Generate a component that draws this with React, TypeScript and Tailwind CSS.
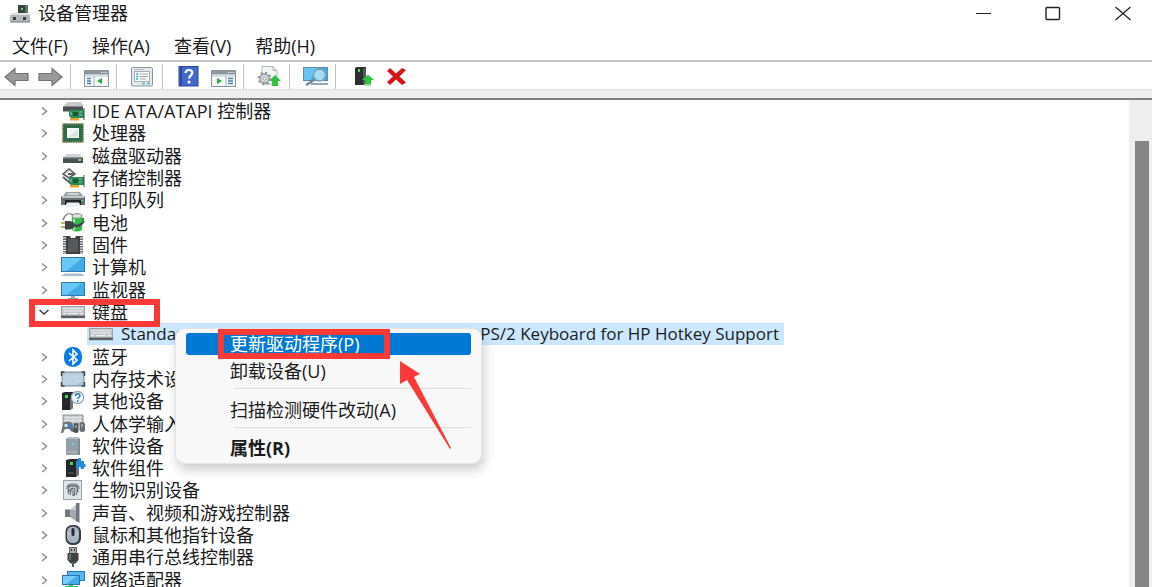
import React from 'react';

type IconName =
  | 'ide' | 'cpu' | 'disk' | 'storage' | 'printer' | 'battery' | 'firmware' | 'computer'
  | 'monitor' | 'keyboard' | 'bluetooth' | 'memory' | 'other' | 'hid' | 'softdev'
  | 'softcomp' | 'biometric' | 'sound' | 'mouse' | 'usb' | 'network';

const keyRows = (
  <g>
    <rect x="0" y="4" width="24" height="12" fill="#9da1a6" />
    <rect x="1" y="5" width="22" height="8" fill="#c3c7cb" />
    <path d="M2 6.5h20M3 9h18" stroke="#eceef0" strokeWidth="1.6" strokeDasharray="1.6 .7" />
    <path d="M2 11.6h3M7 11.6h10M19 11.6h3" stroke="#eceef0" strokeWidth="1.4" />
    <path d="M0 15h24" stroke="#5c6166" strokeWidth="2.4" />
  </g>
);

const chipCard = (
  <g>
    <path d="M8 9h15v8H10l-2-2z" fill="#2d8a54" />
    <path d="M9 17h9v2.5H9z" fill="#e6a52c" />
    <path d="M12 11h5v4h-5z" fill="#165a37" />
    <path d="M18 11h3M18 14h3M10 11v3" stroke="#7ed39f" />
    <path d="M23 7v12" stroke="#3c5145" />
  </g>
);

const tower = (
  <g>
    <path d="M5 2l4-1h8v16l-2 2H5z" fill="#25282a" />
    <path d="M15 3l3-2v16l-3 2z" fill="#6b7073" />
    <rect x="9" y="4" width="3" height="3" fill="#41d958" />
    <path d="M7 15h6" stroke="#5e6468" />
  </g>
);

const drawings: Record<IconName, React.ReactNode> = {
  ide: (
    <g>
      <path d="M4 3l3-2h13l2 3v3H2z" fill="#c6cacc" />
      <path d="M2 5.5h20v5H2z" fill="#4a4f51" />
      {chipCard}
    </g>
  ),
  cpu: (
    <g>
      <rect x="1.5" y=".5" width="21" height="19" fill="#215f42" />
      <rect x="2" y="1" width="20" height="18" fill="none" stroke="#c9a85b" strokeWidth="1.4" strokeDasharray="1 1.4" />
      <rect x="3" y="2" width="18" height="16" fill="#2d6b4c" />
      <rect x="6" y="5" width="12" height="10" fill="#f4f6f4" />
      <path d="M7 14l10-8v8z" fill="#dfe3e0" />
    </g>
  ),
  disk: (
    <g>
      <path d="M5 8h14l3 4H2z" fill="#d3d5d7" />
      <path d="M2 11.5h20v5.5H2z" fill="#4b4e50" />
      <path d="M2 12h20" stroke="#85898c" />
      <rect x="17" y="13" width="3" height="2" fill="#4cdd6a" />
    </g>
  ),
  storage: (
    <g>
      <path d="M2 6l6-5 6 5-6 4z" fill="#e6e9eb" stroke="#5a6064" strokeWidth="1.6" />
      <path d="M2 9l7 6 5-4" fill="none" stroke="#5a6064" strokeWidth="2" />
      <path d="M7 6h5" stroke="#5a6064" strokeWidth="2" />
      {chipCard}
    </g>
  ),
  printer: (
    <g>
      <path d="M5 2h14l3 4H2z" fill="#99a1a5" />
      <path d="M7 3h10l1 2H6z" fill="#cfd4d6" />
      <path d="M1 6h22q1 0 1 1v8H0V7q0-1 1-1z" fill="#687176" />
      <path d="M1 7h22" stroke="#bfc7cb" strokeWidth="2" />
      <path d="M4 10h16v5H4z" fill="#202527" />
      <path d="M6 12.500h12l2 4.500H4z" fill="#eef1f2" />
      <rect x="20" y="10" width="2" height="1" fill="#5be07a" />
    </g>
  ),
  battery: (
    <g>
      <ellipse cx="16" cy="3" rx="5" ry="2.300" fill="#d7e6d8" stroke="#7d8d80" />
      <path d="M11 4v13q5 3 10 0V4q-5 3-10 0z" fill="#35b64a" />
      <path d="M13 6v11" stroke="#a6ee9f" strokeWidth="2" />
      <path d="M2 7Q5-2 12 2" fill="none" stroke="#6b7175" strokeWidth="1.2" />
      <path d="M0 10h5M0 14h5" stroke="#c49a32" strokeWidth="1.7" />
      <path d="M4 8h5q5 1 5 4t-5 4.500H4z" fill="#3f4447" />
      <path d="M13 12q5 3 10-4" fill="none" stroke="#3f4447" strokeWidth="2.4" />
      <path d="M22 5v5" stroke="#32863d" strokeWidth="2" />
    </g>
  ),
  firmware: (
    <g>
      <path d="M3.500 1v18M20.500 1v18" stroke="#65696c" strokeWidth="3" strokeDasharray="1.5 1" />
      <path d="M5 1h4l1 2h4l1-2h4v18H5z" fill="#3e4245" />
      <path d="M7 4h10v13H7z" fill="#55595c" />
    </g>
  ),
  computer: (
    <g>
      <rect x="0" y="0" width="24" height="15" fill="#3479ae" />
      <path d="M1 1h22v13H1z" fill="#42aceb" />
      <path d="M1 1h20L5 14H1z" fill="#6bc7f6" />
      <path d="M4 16.500h16l4 2.500H0z" fill="#a9bccb" />
    </g>
  ),
  monitor: (
    <g>
      <rect x="0" y="2" width="24" height="14" fill="#3479ae" />
      <path d="M1 3h22v12H1z" fill="#42aceb" />
      <path d="M1 3h20L5 15H1z" fill="#6bc7f6" />
      <path d="M10 16h4v2h-4z" fill="#9ba7b0" />
      <path d="M7 18h10v1H7z" fill="#8da3b4" />
    </g>
  ),
  keyboard: keyRows,
  bluetooth: (
    <g>
      <rect x="3" y="0" width="18" height="20" rx="8.5" fill="#0b7ae6" />
      <path d="M8 6l8 7-4 4V3l4 4-8 7" fill="none" stroke="#fff" strokeWidth="1.6" />
    </g>
  ),
  memory: (
    <g>
      <rect x="1" y="3" width="22" height="14" rx="2" fill="#aec5d8" stroke="#7c8c98" />
      <path d="M2 5h20v7l-8 4H2z" fill="#bed2e2" />
      <path d="M.5 7V3h3M20.500 3h3v4M.5 13v4h3M20.500 17h3v-4" fill="none" stroke="#3e4a52" strokeWidth="1.5" />
    </g>
  ),
  other: (
    <g>
      <path d="M1 2l3-1h8v16l-3 2H1z" fill="#25282a" />
      <path d="M9 8h3v9l-3 2z" fill="#6b7073" />
      <rect x="4" y="4" width="3" height="3" fill="#41d958" />
      <ellipse cx="16.500" cy="6.500" rx="6.200" ry="6" fill="#eef5f9" stroke="#9aa9b3" strokeWidth="1.3" />
      <path d="M14.500 5q.2-2.200 2.200-2.200T19 4.600c0 1.700-2.200 1.600-2.200 3.300" fill="none" stroke="#2878b0" strokeWidth="1.5" />
      <circle cx="16.700" cy="10" r=".9" fill="#2878b0" />
    </g>
  ),
  hid: (
    <g>
      <path d="M2 1h20v9H2z" fill="#c3c8cb" stroke="#8c9296" />
      <path d="M4 3.500h16M4 6.500h16" stroke="#f3f4f5" strokeWidth="1.4" strokeDasharray="1.6 .8" />
      <path d="M2 9q5-3 9 0l3 9h-3l-3-3H4l-2 4H0z" fill="#6b757c" />
      <circle cx="5" cy="11.500" r="1.700" fill="#d8e3ea" />
      <circle cx="9" cy="11.500" r="2" fill="#2d87d3" />
      <rect x="12.500" y="9" width="5" height="10" rx="2.500" fill="#4b5358" />
      <rect x="18.500" y="8" width="5.500" height="10" rx="2.500" fill="#697278" />
      <path d="M15 11v3M21 10v3" stroke="#cbd2d6" />
    </g>
  ),
  softdev: (
    <g>
      <path d="M5 3l3-2h9l2 2v16H5z" fill="#7d8a91" />
      <path d="M5 3h12v16H5z" fill="#93a0a7" />
      <path d="M5 3l3-2h9l2 2z" fill="#b7c1c6" />
      <rect x="11" y="7" width="2" height="2" fill="#56d8f0" />
      <path d="M6 16h10" stroke="#b9c3c8" />
    </g>
  ),
  softcomp: (
    <g>
      {tower}
      <path d="M15 3h2q-1-3 1.500-3T20 3h3v3q2 0 2 1.500T23 9v2h-3q0-2-1.500-2T17 11h-2z" fill="#278bd5" />
    </g>
  ),
  biometric: (
    <g>
      <rect x="2.500" y=".5" width="18" height="19" fill="#dce5e7" stroke="#94a4aa" />
      <path d="M6 9q0-5 6-5t6 5M7 12q0-6 5-6t5 6M9 15q1-2 1-6 2-2 4 0 0 4-1 7M7 14q1-5 5-5M12 10v6M15 15q2-3 1-6M6 7q6-3 12 0" fill="none" stroke="#5d686d" strokeWidth="1.1" />
    </g>
  ),
  sound: (
    <g>
      <path d="M4 6.500h5v7.500H4z" fill="#6e777c" />
      <path d="M9 7l7-6v18l-7-5z" fill="#a3a9ad" />
      <path d="M15 0h3.500v20L15 18z" fill="#70787d" />
      <path d="M5 7h4l6-5v5z" fill="#c8cccf" />
    </g>
  ),
  mouse: (
    <g>
      <rect x="4.500" y="0" width="15.500" height="20" rx="6.500" fill="#343b42" />
      <rect x="6" y="1.500" width="12" height="16.500" rx="5.500" fill="#a9b6c3" />
      <path d="M7 9h10" stroke="#c9d2db" />
      <rect x="10.500" y="3" width="3" height="8" rx="1.500" fill="#252b31" />
    </g>
  ),
  usb: (
    <g>
      <rect x="8.500" y=".5" width="7" height="6" fill="#a5aaad" stroke="#616568" />
      <path d="M10.500 2v2M13.500 2v2" stroke="#333" />
      <path d="M6.500 6h11v7l-3 3.500h-5l-3-3.500z" fill="#3e4244" />
      <path d="M9 7v6" stroke="#777c7f" strokeWidth="1.5" />
      <path d="M12 15v5" stroke="#565b5e" strokeWidth="2" />
    </g>
  ),
  network: (
    <g>
      <rect x="6" y="1" width="18" height="10" fill="#2b76b0" />
      <path d="M7 2h16v8H7z" fill="#55b9ef" />
      <rect x="1" y="5" width="18" height="10" fill="#2b76b0" />
      <path d="M2 6h16v8H2z" fill="#42aceb" />
      <path d="M2 6h14L5 14H2z" fill="#79cdf7" />
      <path d="M8 15h4v1H8zM4 16h13v3H4z" fill="#3fbd56" />
    </g>
  ),
};

function DeviceIcon({ name }: { name: IconName }) {
  return (
    <svg viewBox="0 0 24 20" className="h-5 w-6 shrink-0 overflow-visible" aria-hidden="true">
      {drawings[name]}
    </svg>
  );
}

function Chevron({ open }: { open?: boolean }) {
  return (
    <svg viewBox="0 0 12 12" className="size-3" fill="none" aria-hidden="true">
      <path
        d={open ? 'M1.500 4l4.500 4 4.500-4' : 'M4 2.500l4.500 3.800L4 10'}
        stroke={open ? '#3a3a3a' : '#8c8c8c'}
        strokeWidth="1.4"
      />
    </svg>
  );
}

const upArrow = <path d="M18 9l6 6h-3v5h-6v-5h-3z" fill="#2fc040" />;

const panel = (
  <g>
    <rect x=".5" y="4.500" width="24" height="16" fill="#f6f8f9" stroke="#8b9399" />
    <path d="M1 5h23v3.500H1z" fill="#8c969e" />
    <path d="M17 6.500h6" stroke="#dfe4e8" strokeDasharray="1.3 1" />
    <path d="M1 10h23" stroke="#c0c6ca" />
  </g>
);

const toolDrawings = {
  back: (
    <path d="M1 11l10-8.500V7.500h13v7H11v5z" fill="#9a9a9a" stroke="#757575" strokeWidth="1.2" />
  ),
  forward: (
    <path d="M24 11l-10-8.500V7.500H1v7h13v5z" fill="#9a9a9a" stroke="#757575" strokeWidth="1.2" />
  ),
  tree: (
    <g>
      {panel}
      <path d="M3 12.500h4M3 15h4M3 17.500h4" stroke="#477fae" strokeWidth="1.3" />
      <path d="M10 10v10" stroke="#a9b1b7" />
      <path d="M18 12v6l-5-3z" fill="#30ab3b" />
    </g>
  ),
  properties: (
    <g>
      <rect x="1.500" y="1.500" width="21" height="18.500" rx="1" fill="#e3e8ea" stroke="#89959c" />
      <rect x="4.500" y="5.500" width="15" height="10" fill="#fbfcfc" stroke="#a3adb2" />
      <path d="M4 3.500h10" stroke="#b6c0c5" />
      <path d="M6 8h2M6 10.500h2M6 13h2" stroke="#35b8c7" strokeWidth="1.3" />
      <path d="M10 8h8M10 10.500h8M10 13h6" stroke="#98a3a9" strokeWidth="1.1" />
      <path d="M12 17.500h3M17 17.500h3" stroke="#50b9bf" strokeWidth="1.4" />
    </g>
  ),
  help: (
    <g>
      <rect x="3" y=".5" width="19" height="19.500" fill="#4569cb" stroke="#2b479d" />
      <path d="M4 1h2v18.500H4z" fill="#2a489f" />
      <path d="M9.500 7q.3-3 3.500-3t3.300 2.800c0 2.700-3.200 2.600-3.200 5.800" fill="none" stroke="#fff" strokeWidth="2.2" />
      <circle cx="13" cy="16" r="1.5" fill="#fff" />
    </g>
  ),
  action: (
    <g>
      {panel}
      <path d="M15 10v10" stroke="#a9b1b7" />
      <path d="M6 12v6l5-3z" fill="#30ab3b" />
      <path d="M17 12.500h5M17 15h5M17 17.500h5" stroke="#477fae" strokeWidth="1.3" />
    </g>
  ),
  update: (
    <g>
      <path d="M5 .5h11l4 4V18H5z" fill="#f4f5f5" stroke="#b3b8bb" />
      <path d="M16 .5v4h4" fill="#d8dcde" stroke="#b3b8bb" />
      <circle cx="7.500" cy="12.500" r="4.500" fill="#dfe1e2" stroke="#8e9498" strokeWidth="1.4" />
      <circle cx="7.500" cy="12.500" r="6" fill="none" stroke="#8e9498" strokeWidth="1.800" strokeDasharray="2 2.700" />
      <circle cx="7.500" cy="12.500" r="1.700" fill="#fff" stroke="#8e9498" />
      {upArrow}
    </g>
  ),
  scan: (
    <g>
      <rect x=".5" y="1.500" width="24" height="13" fill="#43abe5" stroke="#5c8da8" />
      <path d="M1 2h15L7 14H1z" fill="#6ac4f2" />
      <path d="M8 17h17v2H8z" fill="#8ba7b8" />
      <circle cx="16.500" cy="9" r="6" fill="#a6dbf5" stroke="#7c9caf" strokeWidth="1.3" />
      <path d="M12 13.500L3 19" stroke="#738a99" strokeWidth="2.5" />
    </g>
  ),
  enable: (
    <g>
      <path d="M2 2l2-1h9v16l-2 2H2z" fill="#2b2e30" />
      <path d="M10 3l3-2v16l-3 2z" fill="#53585a" />
      <rect x="5" y="3" width="2" height="3" fill="#46db5c" />
      <path d="M15 8.500l6 5.500h-3v4h-6v-4H9z" fill="#2fc040" />
      <path d="M12 19h6" stroke="#6cda76" strokeWidth="1.5" />
    </g>
  ),
  uninstall: (
    <path d="M1 5l3-3 6 5.500L16 2l4 2-6.500 6.500L20 16.500 16 19l-6-5.500L4 19l-3-3 6-5.500z" fill="#d8121b" />
  ),
};

type ToolName = keyof typeof toolDrawings;

function Tool({ name, label }: { name: ToolName; label: string }) {
  return (
    <button type="button" aria-label={label} className="w-6 shrink-0">
      <svg viewBox="0 0 24 21" className="h-[21px] w-6 overflow-visible" aria-hidden="true">
        {toolDrawings[name]}
      </svg>
    </button>
  );
}

function Separator() {
  return <div className="mr-[13px] ml-2 h-full w-px shrink-0 bg-[#c2c2c2]" />;
}

const devices: { icon: IconName; label: string }[] = [
  { icon: 'ide', label: 'IDE ATA/ATAPI 控制器' },
  { icon: 'cpu', label: '处理器' },
  { icon: 'disk', label: '磁盘驱动器' },
  { icon: 'storage', label: '存储控制器' },
  { icon: 'printer', label: '打印队列' },
  { icon: 'battery', label: '电池' },
  { icon: 'firmware', label: '固件' },
  { icon: 'computer', label: '计算机' },
  { icon: 'monitor', label: '监视器' },
  { icon: 'keyboard', label: '键盘' },
  { icon: 'bluetooth', label: '蓝牙' },
  { icon: 'memory', label: '内存技术设备' },
  { icon: 'other', label: '其他设备' },
  { icon: 'hid', label: '人体学输入设备' },
  { icon: 'softdev', label: '软件设备' },
  { icon: 'softcomp', label: '软件组件' },
  { icon: 'biometric', label: '生物识别设备' },
  { icon: 'sound', label: '声音、视频和游戏控制器' },
  { icon: 'mouse', label: '鼠标和其他指针设备' },
  { icon: 'usb', label: '通用串行总线控制器' },
  { icon: 'network', label: '网络适配器' },
];

function ContextMenu() {
  return (
    <div
      role="menu"
      className="absolute top-[5px] left-[175px] z-10 flex w-[307px] flex-col rounded-[10px] border border-[#e4e4e4] bg-[#f8f8f8] px-[10px] pt-1 pb-[2px] shadow-[2px_6px_12px_rgba(0,0,0,0.2)]"
    >
      <button type="button" role="menuitem" className="h-[22px] rounded-[3px] bg-[#0078d4] pl-11 text-left leading-[22px] text-white">
        更新驱动程序(P)
      </button>
      <button type="button" role="menuitem" className="h-[33px] pl-11 text-left leading-[33px]">
        卸载设备(U)
      </button>
      <hr className="ml-12 border-[#dedede]" />
      <button type="button" role="menuitem" className="h-[38px] pl-11 text-left leading-[42px]">
        扫描检测硬件改动(A)
      </button>
      <hr className="ml-12 border-[#dedede]" />
      <button type="button" role="menuitem" className="h-[33px] pl-11 text-left leading-[40px] font-bold">
        属性(R)
      </button>
      <div className="pointer-events-none absolute top-0 left-[42px] h-[30px] w-[172px] border-[6px] border-[#fb3a38]" />
      <svg viewBox="0 0 52 88" className="pointer-events-none absolute top-8 left-[224px] h-[88px] w-[52px]" aria-hidden="true">
        <path d="M0 0l20 13-6 3 37 71-1 1L7 19l-7 4z" fill="#fb3a38" />
      </svg>
    </div>
  );
}

function SelectedDevice() {
  return (
    <li className="relative flex flex-1 pl-[87px]">
      <div className="flex w-[697px] items-center bg-[#cce8ff] pl-[2px]">
        <DeviceIcon name="keyboard" />
        <span className="ml-2 flex flex-1 justify-between pr-[5px] text-[17px] whitespace-nowrap">
          <span>Standard</span>
          <span>PS/2 Keyboard for HP Hotkey Support</span>
        </span>
      </div>
      <ContextMenu />
    </li>
  );
}

export default function App() {
  return (
    <div className="flex h-screen flex-col overflow-hidden bg-white font-['Open_Sans','Noto_Sans_CJK_SC',sans-serif] text-[18px] leading-[22px] text-[#1b1b1b]">
      <header className="flex h-[30px] shrink-0 items-center pl-[9px]">
        <svg viewBox="0 0 22 20" className="h-5 w-[22px]" aria-hidden="true">
          <path d="M9 0l2-1h8v11H9z" fill="#354239" />
          <path d="M16 0l3-1v11h-3z" fill="#66706a" />
          <rect x="12" y="3" width="2" height="2" fill="#5ed171" />
          <path d="M3 8h16l2 2H1z" fill="#e2e3e5" />
          <path d="M1 10h20v7H1z" fill="#b4b8be" />
          <path d="M1 17h20" stroke="#777c82" />
          <rect x="4" y="12" width="3" height="3" fill="#3b3f44" />
          <rect x="14" y="12" width="3" height="3" fill="#3b3f44" />
        </svg>
        <h1 className="ml-[7px] flex-1 pb-1">设备管理器</h1>
        <div className="flex h-full items-center gap-[54px] pr-[21px] pb-1">
          <button type="button" aria-label="最小化">
            <svg viewBox="0 0 16 16" className="size-4" stroke="#222" aria-hidden="true"><path d="M1 8.500h15" /></svg>
          </button>
          <button type="button" aria-label="最大化">
            <svg viewBox="0 0 16 16" className="size-4" fill="none" stroke="#222" strokeWidth="1.4" aria-hidden="true"><rect x="1" y="2.500" width="13.500" height="12" rx="1" /></svg>
          </button>
          <button type="button" aria-label="关闭">
            <svg viewBox="0 0 16 16" className="size-4" stroke="#222" strokeWidth="1.3" aria-hidden="true"><path d="M.5 2l15 13M15.500 2L.5 15" /></svg>
          </button>
        </div>
      </header>
      <nav className="flex h-[30px] shrink-0 items-center gap-6 pt-[2px] pl-3">
        <button type="button">文件(F)</button>
        <button type="button">操作(A)</button>
        <button type="button">查看(V)</button>
        <button type="button">帮助(H)</button>
      </nav>
      <div role="toolbar" className="flex h-[30px] shrink-0 items-center border-t-2 border-b border-t-[#c3c3c3] border-b-[#dcdcdc] pt-[2px] pl-1">
        <Tool name="back" label="后退" />
        <div className="w-[10px]" />
        <Tool name="forward" label="前进" />
        <Separator />
        <Tool name="tree" label="显示控制台树" />
        <Separator />
        <Tool name="properties" label="属性" />
        <Separator />
        <Tool name="help" label="帮助" />
        <div className="w-[11px]" />
        <Tool name="action" label="操作窗格" />
        <Separator />
        <Tool name="update" label="更新驱动程序" />
        <Separator />
        <Tool name="scan" label="扫描检测硬件改动" />
        <Separator />
        <div className="w-1" />
        <Tool name="enable" label="启用设备" />
        <div className="w-[9px]" />
        <Tool name="uninstall" label="卸载设备" />
      </div>
      <div className="h-[10px] shrink-0 border-b-2 border-[#808080] bg-[#eeeeee]" />
      <main className="flex min-h-0 flex-1">
        <ul className="-mb-1 flex min-w-0 flex-1 flex-col">
          {devices.map((device) => {
            const open = device.icon === 'keyboard';
            return (
              <React.Fragment key={device.icon}>
                <li className="relative flex flex-1 items-center pl-[38px] whitespace-nowrap">
                  <button type="button" aria-label={device.label} aria-expanded={open} className="mr-[11px]">
                    <Chevron open={open} />
                  </button>
                  <DeviceIcon name={device.icon} />
                  <span className="ml-[7px]">{device.label}</span>
                  {open && (
                    <div className="pointer-events-none absolute -top-[2px] left-[29px] z-10 h-7 w-[131px] border-[6px] border-[#fb3a38]" />
                  )}
                </li>
                {open && <SelectedDevice />}
              </React.Fragment>
            );
          })}
        </ul>
        <div className="w-[23px] shrink-0 bg-[#efefef] pt-[41px] pr-[3px] pl-[6px]">
          <div className="h-full bg-[#858585]" />
        </div>
      </main>
    </div>
  );
}
